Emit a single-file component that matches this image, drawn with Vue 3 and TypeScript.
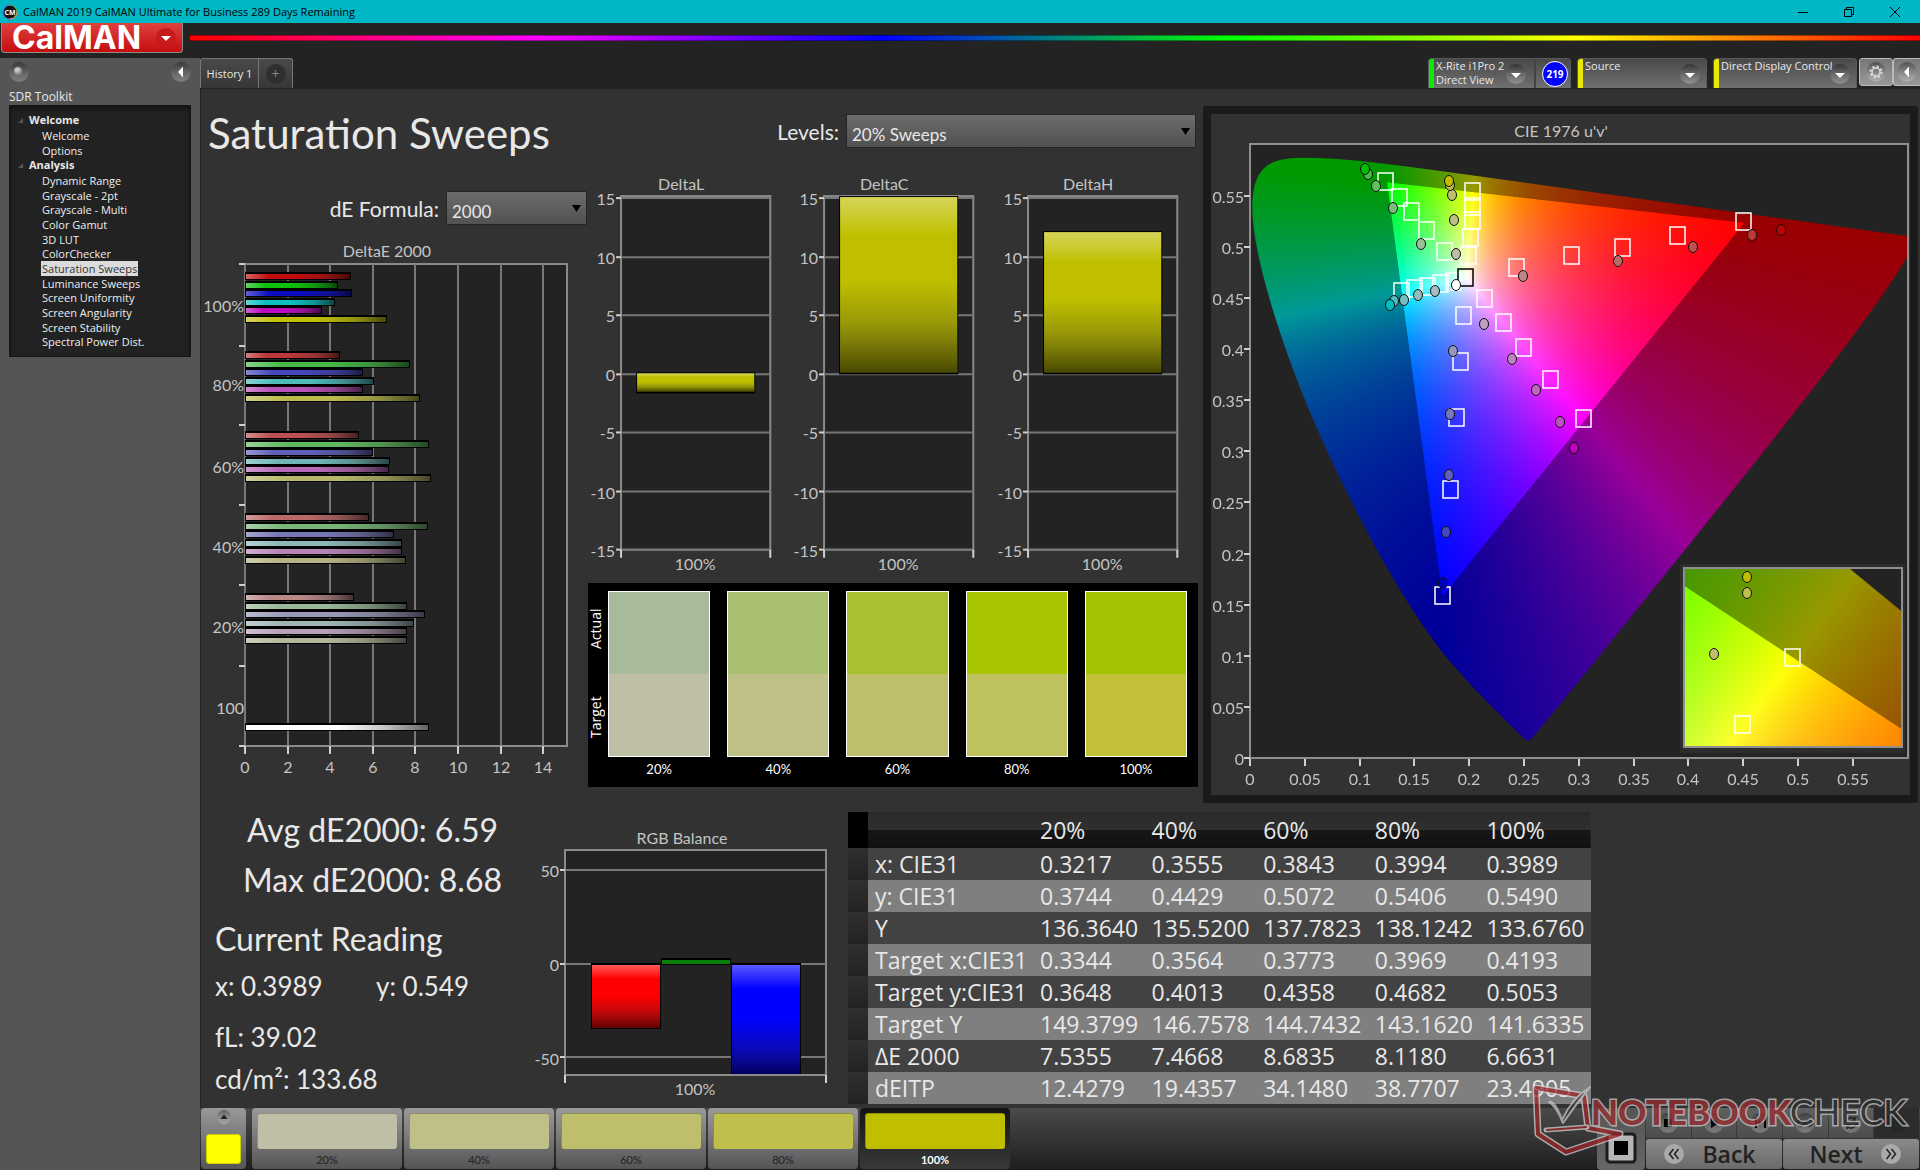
<script setup lang="ts">
import { onMounted, ref } from 'vue'

type Pt = [number, number]
interface Marker { x: number; y: number; fill: string }

/* ---------- navigation ---------- */
const tree = [
  { name: 'Welcome', items: ['Welcome', 'Options'] },
  {
    name: 'Analysis',
    items: [
      'Dynamic Range', 'Grayscale - 2pt', 'Grayscale - Multi', 'Color Gamut', '3D LUT',
      'ColorChecker', 'Saturation Sweeps', 'Luminance Sweeps', 'Screen Uniformity',
      'Screen Angularity', 'Screen Stability', 'Spectral Power Dist.',
    ],
  },
]
const selectedPage = 'Saturation Sweeps'

/* ---------- DeltaE 2000 chart ---------- */
const deGroups = [
  { label: '100%', top: 47, base: 87, colors: ['#c00c0c', '#0cc00c', '#0c0cc0', '#0cc0c0', '#c00cc0', '#c0c00c'], len: [106, 93, 107, 90, 77, 142] },
  { label: '80%', top: 126, base: 166, colors: ['#bb3838', '#46bb46', '#4646bb', '#50bbbb', '#bb50bb', '#bbbb4a'], len: [95, 165, 118, 129, 118, 175] },
  { label: '60%', top: 206, base: 248, colors: ['#bc5151', '#60b860', '#6060b8', '#70b6b6', '#b868b8', '#b8b868'], len: [114, 184, 128, 145, 144, 186] },
  { label: '40%', top: 288, base: 328, colors: ['#bb6868', '#78b678', '#7878b8', '#8cb8b8', '#b884b8', '#b4b484'], len: [124, 183, 149, 157, 157, 161] },
  { label: '20%', top: 368, base: 408, colors: ['#bb8888', '#98b898', '#9898b8', '#a0b4b4', '#b8a0b8', '#b6b69a'], len: [109, 162, 180, 169, 162, 162] },
]
const deBars = deGroups.flatMap((g) =>
  g.len.map((len, i) => ({ key: g.label + i, y: g.top + Math.round(i * 8.5), len, color: g.colors[i] })),
)
deBars.push({ key: 'white', y: 498, len: 184, color: '#ffffff' })
const deTicksY = [39, 121, 200, 280, 360, 441, 521]
const deTicksX = [0, 2, 4, 6, 8, 10, 12, 14].map((v) => ({ v, x: 45 + Math.round(v * 21.3) }))

/* ---------- DeltaL / C / H charts ---------- */
const deltaTicks = [15, 10, 5, 0, -5, -10, -15].map((v) => ({ v, y: 226 - Math.round(v * 11.7) }))
const deltas = [
  { name: 'DeltaL', y: 224, h: 21 },
  { name: 'DeltaC', y: 48, h: 178 },
  { name: 'DeltaH', y: 83, h: 143 },
]

/* ---------- swatches ---------- */
const sweeps = [
  { label: '20%', actual: '#a7bb9c', target: '#bfbfa5' },
  { label: '40%', actual: '#a7bf6e', target: '#bfbf88' },
  { label: '60%', actual: '#a7c133', target: '#bfbf6b' },
  { label: '80%', actual: '#a9c400', target: '#bfc05e' },
  { label: '100%', actual: '#a3c400', target: '#c1c037' },
]
const patches = [
  { label: '20%', color: '#bfbfa5' },
  { label: '40%', color: '#bfbf88' },
  { label: '60%', color: '#bfbf6b' },
  { label: '80%', color: '#bfbf4c' },
  { label: '100%', color: '#bfbf00' },
]

/* ---------- results table ---------- */
const columns = ['20%', '40%', '60%', '80%', '100%']
const rows: [string, string[]][] = [
  ['x: CIE31', ['0.3217', '0.3555', '0.3843', '0.3994', '0.3989']],
  ['y: CIE31', ['0.3744', '0.4429', '0.5072', '0.5406', '0.5490']],
  ['Y', ['136.3640', '135.5200', '137.7823', '138.1242', '133.6760']],
  ['Target x:CIE31', ['0.3344', '0.3564', '0.3773', '0.3969', '0.4193']],
  ['Target y:CIE31', ['0.3648', '0.4013', '0.4358', '0.4682', '0.5053']],
  ['Target Y', ['149.3799', '146.7578', '144.7432', '143.1620', '141.6335']],
  ['ΔE 2000', ['7.5355', '7.4668', '8.6835', '8.1180', '6.6631']],
  ['dEITP', ['12.4279', '19.4357', '34.1480', '38.7707', '23.4905']],
]

/* ---------- chromaticity diagram ---------- */
const PLOT_W = 658
const PLOT_H = 614
const INSET_W = 218
const INSET_H = 179
const uTicks = Array.from({ length: 12 }, (_, i) => ({ label: String(+(i * 0.05).toFixed(2)), x: 39 + Math.round(i * 54.8) }))
const vTicks = Array.from({ length: 12 }, (_, i) => ({ label: String(+(i * 0.05).toFixed(2)), y: 644 - Math.round(i * 51.1) }))

const targets: Pt[] = [
  [135, 37], [149, 53], [161, 67], [176, 86], [194, 107],
  [222, 47], [222, 62], [222, 76], [220, 93], [218, 111],
  [151, 147], [164, 144], [177, 142], [190, 139], [203, 137],
  [266, 123], [321, 111], [372, 103], [427, 91], [493, 77],
  [234, 154], [253, 178], [273, 203], [300, 235], [333, 274],
  [213, 171], [210, 217], [206, 273], [200, 345], [192, 451],
]
const readings: Marker[] = [
  { x: 171, y: 100, fill: '#98bf98' }, { x: 143, y: 64, fill: '#7cbc7c' }, { x: 126, y: 42, fill: '#62bf62' }, { x: 118, y: 30, fill: '#46b946' }, { x: 115, y: 25, fill: '#00bf00' },
  { x: 206, y: 110, fill: '#bfbfa5' }, { x: 204, y: 76, fill: '#bfbf88' }, { x: 202, y: 51, fill: '#bfbf6b' }, { x: 200, y: 41, fill: '#bfbf4c' }, { x: 199, y: 37, fill: '#bfbf00' },
  { x: 185, y: 147, fill: '#a4bfbf' }, { x: 168, y: 151, fill: '#8ebfbf' }, { x: 154, y: 156, fill: '#74bfbf' }, { x: 144, y: 157, fill: '#54bfbf' }, { x: 140, y: 161, fill: '#00bfbf' },
  { x: 273, y: 132, fill: '#bf8888' }, { x: 368, y: 117, fill: '#bf6a6a' }, { x: 443, y: 103, fill: '#bf5050' }, { x: 502, y: 91, fill: '#bf3838' }, { x: 531, y: 86, fill: '#bf0000' },
  { x: 234, y: 180, fill: '#bfa0bf' }, { x: 262, y: 215, fill: '#bf84bf' }, { x: 286, y: 246, fill: '#bf6abf' }, { x: 310, y: 278, fill: '#bf50bf' }, { x: 324, y: 304, fill: '#bf00bf' },
  { x: 203, y: 207, fill: '#9898bf' }, { x: 200, y: 270, fill: '#7878bf' }, { x: 199, y: 331, fill: '#6060bf' }, { x: 196, y: 388, fill: '#4646bf' }, { x: 193, y: 439, fill: '#0000bf' },
  { x: 206, y: 141, fill: '#ffffff' },
]
const insetTargets: Pt[] = [[108, 89], [58, 156]]
const insetReadings: Marker[] = [
  { x: 63, y: 9, fill: '#bfbf00' },
  { x: 63, y: 25, fill: '#bfbf4c' },
  { x: 30, y: 86, fill: '#bfbf6b' },
]

/* CIE 1931 xy of the spectral locus, 380 nm to 700 nm */
const locus: Pt[] = [
  [0.1741, 0.005], [0.1714, 0.0051], [0.1689, 0.0069], [0.1644, 0.0109], [0.1566, 0.0177],
  [0.144, 0.0297], [0.1355, 0.0399], [0.1241, 0.0578], [0.1096, 0.0868], [0.0913, 0.1327],
  [0.0687, 0.2007], [0.0454, 0.295], [0.0235, 0.4127], [0.0082, 0.5384], [0.0039, 0.6548],
  [0.0139, 0.7502], [0.0389, 0.812], [0.0743, 0.8338], [0.1142, 0.8262], [0.1547, 0.8059],
  [0.2296, 0.7543], [0.3016, 0.6923], [0.3731, 0.6245], [0.4441, 0.5547], [0.5125, 0.4866],
  [0.5752, 0.4242], [0.627, 0.3725], [0.6658, 0.334], [0.6915, 0.3083], [0.719, 0.2809], [0.7347, 0.2653],
]

const plotCanvas = ref<HTMLCanvasElement | null>(null)
const insetCanvas = ref<HTMLCanvasElement | null>(null)

/* Fill a canvas with the colour of every chromaticity, dimmed outside the Rec.709 triangle. */
function paint(canvas: HTMLCanvasElement, toXy: (px: number, py: number) => Pt, fromXy: (x: number, y: number) => Pt) {
  const ctx = canvas.getContext('2d')
  if (!ctx) return
  const w = canvas.width
  const h = canvas.height
  const image = ctx.createImageData(w, h)
  for (let j = 0; j < h; j++) {
    for (let i = 0; i < w; i++) {
      const [x, y] = toXy((i + 0.5) / w, (j + 0.5) / h)
      const z = 1 - x - y
      let r = 3.2406 * x - 1.5372 * y - 0.4986 * z
      let g = -0.9689 * x + 1.8758 * y + 0.0415 * z
      let b = 0.0557 * x - 0.204 * y + 1.057 * z
      const level = r < 0 || g < 0 || b < 0 ? 153 : 255
      r = Math.max(r, 0)
      g = Math.max(g, 0)
      b = Math.max(b, 0)
      const k = level / Math.max(r, g, b, 0.0001)
      const o = (j * w + i) * 4
      image.data[o] = r * k
      image.data[o + 1] = g * k
      image.data[o + 2] = b * k
      image.data[o + 3] = 255
    }
  }
  ctx.putImageData(image, 0, 0)
  const p = locus.map(([x, y]) => {
    const [a, b] = fromXy(x, y)
    return [a * w, b * h] as Pt
  })
  const n = p.length
  ctx.globalCompositeOperation = 'destination-in'
  ctx.beginPath()
  ctx.moveTo((p[n - 1][0] + p[0][0]) / 2, (p[n - 1][1] + p[0][1]) / 2)
  for (let i = 0; i < n; i++) {
    const q = p[(i + 1) % n]
    ctx.quadraticCurveTo(p[i][0], p[i][1], (p[i][0] + q[0]) / 2, (p[i][1] + q[1]) / 2)
  }
  ctx.closePath()
  ctx.fill()
}

onMounted(() => {
  if (plotCanvas.value) {
    paint(
      plotCanvas.value,
      (px, py) => {
        const u = px * 0.6
        const v = (1 - py) * 0.6
        const d = 6 * u - 16 * v + 12
        return [(9 * u) / d, (4 * v) / d]
      },
      (x, y) => {
        const d = -2 * x + 12 * y + 3
        return [(4 * x) / d / 0.6, 1 - (9 * y) / d / 0.6]
      },
    )
  }
  if (insetCanvas.value) {
    const cx = 0.4193
    const cy = 0.5053
    const rx = 0.0986
    const ry = 0.0976
    paint(
      insetCanvas.value,
      (px, py) => [cx + (px - 0.5) * rx, cy - (py - 0.5) * ry],
      (x, y) => [(x - cx) / rx + 0.5, 0.5 - (y - cy) / ry],
    )
  }
})
</script>

<template>
  <div class="app">
    <header class="titlebar">
      <svg class="app-icon" viewBox="0 0 16 16" aria-hidden="true">
        <circle cx="8" cy="8" r="7" fill="#111" stroke="#7a4fd0" stroke-width="1" />
        <path d="M8 1a7 7 0 0 1 7 7" fill="none" stroke="#4c4" />
        <path d="M15 8a7 7 0 0 1-7 7" fill="none" stroke="#fa3" />
        <path d="M1 8a7 7 0 0 1 7-7" fill="none" stroke="#38f" />
        <text x="8" y="11" text-anchor="middle" class="icon-text">CM</text>
      </svg>
      <span class="titlebar-text">CalMAN 2019 CalMAN Ultimate for Business 289 Days Remaining</span>
      <div class="window-buttons">
        <button type="button" aria-label="Minimize"><svg viewBox="0 0 10 10"><path d="M0 5.5h10" /></svg></button>
        <button type="button" aria-label="Restore"><svg viewBox="0 0 10 10"><path d="M.5 2.5h7v7h-7zM2.500 2.500v-2h7v7h-2" /></svg></button>
        <button type="button" aria-label="Close"><svg viewBox="0 0 10 10"><path d="M0 0l10 10M10 0L0 10" /></svg></button>
      </div>
    </header>

    <div class="brandbar">
      <button type="button" class="brand">
        <span class="brand-name">CalMAN</span>
        <svg class="brand-arrow" viewBox="0 0 20 20" aria-hidden="true"><circle cx="10" cy="10" r="10" fill="#c8191c" /><path d="M5 8h10l-5 5z" fill="#fff" /></svg>
      </button>
      <div class="rainbow"></div>
    </div>

    <div class="body">
      <aside class="sidebar">
        <div class="sidebar-top">
          <svg class="knob" viewBox="0 0 20 20" aria-hidden="true"><circle cx="10" cy="10" r="10" fill="url(#knob)" /><circle cx="9" cy="9" r="4" fill="url(#ball)" /></svg>
          <button type="button" class="knob" aria-label="Collapse panel">
            <svg viewBox="0 0 20 20"><circle cx="10" cy="10" r="10" fill="url(#knob)" /><path d="M12 4.500v11L7 10z" fill="#fff" /></svg>
          </button>
        </div>
        <h2 class="toolkit">SDR Toolkit</h2>
        <nav class="tree">
          <template v-for="group in tree" :key="group.name">
            <div class="tree-head"><span class="tree-mark"></span>{{ group.name }}</div>
            <ul>
              <li v-for="item in group.items" :key="item">
                <a href="#" :class="{ selected: item === selectedPage }">{{ item }}</a>
              </li>
            </ul>
          </template>
        </nav>
      </aside>

      <main class="workspace">
        <div class="toolbar">
          <div class="tabs">
            <button type="button" class="tab">History 1</button>
            <button type="button" class="tab tab-add" aria-label="Add history"><span>+</span></button>
          </div>
          <div class="devices">
            <div class="device device-meter">
              <span class="strip strip-green"></span>
              <span class="device-name">X-Rite i1Pro 2<br />Direct View</span>
              <button type="button" class="knob" aria-label="Meter menu"><svg viewBox="0 0 20 20"><circle cx="10" cy="10" r="10" fill="url(#knob)" /><path d="M5 9h10l-5 5z" fill="#fff" /></svg></button>
              <span class="device-count"><b>219</b></span>
            </div>
            <div class="device device-source">
              <span class="strip"></span>
              <span class="device-name">Source</span>
              <button type="button" class="knob" aria-label="Source menu"><svg viewBox="0 0 20 20"><circle cx="10" cy="10" r="10" fill="url(#knob)" /><path d="M5 9h10l-5 5z" fill="#fff" /></svg></button>
            </div>
            <div class="device device-display">
              <span class="strip"></span>
              <span class="device-name">Direct Display Control</span>
              <button type="button" class="knob" aria-label="Display menu"><svg viewBox="0 0 20 20"><circle cx="10" cy="10" r="10" fill="url(#knob)" /><path d="M5 9h10l-5 5z" fill="#fff" /></svg></button>
            </div>
            <button type="button" class="tool" aria-label="Settings">
              <svg viewBox="0 0 20 20">
                <circle cx="10" cy="10" r="10" fill="url(#knob)" />
                <circle cx="10" cy="10" r="4" fill="none" stroke="#ddd" stroke-width="1.500" />
                <circle cx="10" cy="10" r="5.500" fill="none" stroke="#ddd" stroke-width="2" stroke-dasharray="2.100 2.220" />
              </svg>
            </button>
            <button type="button" class="tool tool-last" aria-label="Collapse toolbar">
              <svg viewBox="0 0 20 20"><circle cx="10" cy="10" r="10" fill="url(#knob)" /><path d="M12 4.500v11L7 10z" fill="#fff" /></svg>
            </button>
          </div>
        </div>

        <section class="page">
          <div class="upper">
            <div class="col-sweeps">
              <h1>Saturation Sweeps</h1>
              <div class="field field-formula">
                <label for="formula">dE Formula:</label>
                <span class="combo combo-formula"><select id="formula"><option>2000</option></select></span>
              </div>
              <svg class="chart" viewBox="0 0 388 575" role="img" aria-label="DeltaE 2000">
                <defs>
                  <linearGradient id="shadeX" x1="0" x2="1" y1="0" y2="0">
                    <stop offset="0" stop-color="#fff" stop-opacity="0.350" />
                    <stop offset="0.220" stop-color="#fff" stop-opacity="0" />
                    <stop offset="0.500" stop-color="#222" stop-opacity="0" />
                    <stop offset="0.750" stop-color="#222" stop-opacity="0.250" />
                    <stop offset="1" stop-color="#000" stop-opacity="0.620" />
                  </linearGradient>
                  <linearGradient id="shadeY" x1="0" x2="0" y1="0" y2="1">
                    <stop offset="0" stop-color="#fff" stop-opacity="0.350" />
                    <stop offset="0.220" stop-color="#fff" stop-opacity="0" />
                    <stop offset="0.480" stop-color="#222" stop-opacity="0" />
                    <stop offset="0.720" stop-color="#222" stop-opacity="0.250" />
                    <stop offset="1" stop-color="#000" stop-opacity="0.620" />
                  </linearGradient>
                  <linearGradient id="knob" x1="0" x2="0" y1="0" y2="1">
                    <stop offset="0" stop-color="#000" stop-opacity="0.350" />
                    <stop offset="1" stop-color="#fff" stop-opacity="0.250" />
                  </linearGradient>
                  <radialGradient id="ball" cx="0.400" cy="0.350" r="0.700">
                    <stop offset="0" stop-color="#ddd" />
                    <stop offset="1" stop-color="#777" />
                  </radialGradient>
                </defs>
                <text x="187" y="32" text-anchor="middle">DeltaE 2000</text>
                <rect x="45" y="39" width="322" height="482" class="plot" />
                <path v-for="t in deTicksX" :key="'g' + t.v" :d="`M${t.x} 39V521`" class="grid" />
                <path v-for="t in deTicksX" :key="'t' + t.v" :d="`M${t.x} 521v8`" class="tick" />
                <path v-for="y in deTicksY" :key="'y' + y" :d="`M39 ${y}h6`" class="tick" />
                <text v-for="t in deTicksX" :key="'l' + t.v" :x="t.x" y="548" text-anchor="middle">{{ t.v }}</text>
                <text v-for="g in deGroups" :key="g.label" x="44" :y="g.base" text-anchor="end">{{ g.label }}</text>
                <text x="44" y="489" text-anchor="end">100</text>
                <g v-for="b in deBars" :key="b.key">
                  <rect x="45" :y="b.y" :width="b.len" height="8" fill="#000" />
                  <rect x="46" :y="b.y + 2" :width="b.len - 2" height="5" :fill="b.color" />
                  <rect x="46" :y="b.y + 2" :width="b.len - 2" height="5" fill="url(#shadeX)" />
                </g>
              </svg>
            </div>

            <div class="col-deltas">
              <div class="field field-levels">
                <label for="levels">Levels:</label>
                <span class="combo combo-levels"><select id="levels"><option>20% Sweeps</option></select></span>
              </div>
              <div class="delta-row">
                <svg v-for="d in deltas" :key="d.name" class="chart" viewBox="0 0 203 434" role="img" :aria-label="d.name">
                  <text x="93" y="42" text-anchor="middle">{{ d.name }}</text>
                  <rect x="33" y="48" width="149" height="353" class="plot" />
                  <g v-for="t in deltaTicks" :key="t.v">
                    <path :d="`M33 ${t.y}h149`" class="grid" />
                    <path :d="`M28 ${t.y}h5`" class="tick" />
                    <text x="27" :y="t.y + 7" text-anchor="end">{{ t.v }}</text>
                  </g>
                  <path d="M33 401v8M182 401v8" class="tick" />
                  <rect x="48" :y="d.y" width="119" :height="d.h" fill="#000" />
                  <rect x="49" :y="d.y + 1" width="117" :height="d.h - 3" fill="#bfbf00" />
                  <rect x="49" :y="d.y + 1" width="117" :height="d.h - 3" fill="url(#shadeY)" />
                  <text x="107" y="421" text-anchor="middle">100%</text>
                </svg>
              </div>
              <div class="swatches">
                <div class="swatch-axis"><span>Actual</span><span>Target</span></div>
                <div v-for="s in sweeps" :key="s.label" class="swatch">
                  <div class="swatch-box">
                    <div :style="{ background: s.actual }"></div>
                    <div :style="{ background: s.target }"></div>
                  </div>
                  <span>{{ s.label }}</span>
                </div>
              </div>
            </div>

            <div class="cie">
              <svg class="chart" viewBox="0 0 699 681" role="img" aria-label="CIE 1976 u'v'">
                <text x="350" y="23" text-anchor="middle">CIE 1976 u'v'</text>
                <rect x="39" y="30" :width="PLOT_W" :height="PLOT_H" fill="#232323" />
                <foreignObject x="39" y="30" :width="PLOT_W" :height="PLOT_H">
                  <canvas ref="plotCanvas" :width="PLOT_W * 2" :height="PLOT_H * 2"></canvas>
                </foreignObject>
                <rect x="39" y="30" :width="PLOT_W" :height="PLOT_H" class="frame" />
                <g v-for="t in vTicks" :key="'v' + t.label">
                  <path :d="`M33 ${t.y}h6`" class="tick" />
                  <text x="33" :y="t.y + 7" text-anchor="end">{{ t.label }}</text>
                </g>
                <g v-for="t in uTicks" :key="'u' + t.label">
                  <path :d="`M${t.x} 645v7`" class="tick" />
                  <text :x="t.x" y="671" text-anchor="middle">{{ t.label }}</text>
                </g>
                <g transform="translate(39 30)">
                  <rect v-for="(p, i) in targets" :key="i" :x="p[0] - 7" :y="p[1] - 8" width="15" height="17" class="target" />
                  <rect x="208" y="125" width="15" height="17" class="target target-white" />
                  <ellipse v-for="(m, i) in readings" :key="'r' + i" :cx="m.x" :cy="m.y" rx="4.500" ry="5.500" :fill="m.fill" class="reading" />
                </g>
                <rect x="469" y="450" width="225" height="189" fill="#2d2d2d" />
                <g transform="translate(473 454)">
                  <rect width="218" height="179" fill="#232323" />
                  <foreignObject :width="INSET_W" :height="INSET_H">
                    <canvas ref="insetCanvas" :width="INSET_W * 2" :height="INSET_H * 2"></canvas>
                  </foreignObject>
                  <rect width="218" height="179" class="frame" />
                  <rect v-for="(p, i) in insetTargets" :key="i" :x="p[0] - 7" :y="p[1] - 8" width="15" height="17" class="target" />
                  <ellipse v-for="(m, i) in insetReadings" :key="'r' + i" :cx="m.x" :cy="m.y" rx="4.500" ry="5.500" :fill="m.fill" class="reading" />
                </g>
              </svg>
            </div>
          </div>

          <div class="lower">
            <div class="stats">
              <p class="big">Avg dE2000: 6.59</p>
              <p class="big">Max dE2000: 8.68</p>
              <h3>Current Reading</h3>
              <div class="xy"><span>x: 0.3989</span><span>y: 0.549</span></div>
              <p class="value">fL: 39.02</p>
              <p class="value value-last">cd/m²: 133.68</p>
            </div>

            <svg class="chart" viewBox="0 0 310 305" role="img" aria-label="RGB Balance">
              <text x="152" y="41" text-anchor="middle">RGB Balance</text>
              <rect x="35" y="47" width="261" height="225" class="plot" />
              <path d="M35 67h261M35 161h261M35 254h261" class="grid" />
              <path d="M30 67h5M30 161h5M30 254h5M35 272v8M296 272v8" class="tick" />
              <text x="29" y="74" text-anchor="end">50</text>
              <text x="29" y="168" text-anchor="end">0</text>
              <text x="29" y="262" text-anchor="end">-50</text>
              <text x="165" y="292" text-anchor="middle">100%</text>
              <rect x="61" y="160" width="70" height="66" fill="#000" />
              <rect x="62" y="162" width="68" height="63" fill="#f00" />
              <rect x="62" y="162" width="68" height="63" fill="url(#shadeY)" />
              <rect x="131" y="155" width="70" height="7" fill="#000" />
              <rect x="132" y="157" width="68" height="4" fill="#0a800a" />
              <rect x="201" y="160" width="70" height="111" fill="#000" />
              <rect x="202" y="162" width="68" height="109" fill="#00f" />
              <rect x="202" y="162" width="68" height="109" fill="url(#shadeY)" />
            </svg>

            <table class="results">
              <thead>
                <tr>
                  <td class="handle"></td>
                  <td class="name"></td>
                  <th v-for="c in columns" :key="c" scope="col">{{ c }}</th>
                </tr>
              </thead>
              <tbody>
                <tr v-for="r in rows" :key="r[0]">
                  <td class="handle"></td>
                  <th scope="row" class="name">{{ r[0] }}</th>
                  <td v-for="(v, i) in r[1]" :key="i">{{ v }}</td>
                </tr>
              </tbody>
            </table>
          </div>
        </section>

        <footer class="patchbar">
          <button type="button" class="current" aria-label="Current patch">
            <svg viewBox="0 0 16 16" aria-hidden="true"><circle cx="8" cy="8" r="7" fill="url(#knob)" /><path d="M4.500 10h7L8 5.500z" fill="#222" /></svg>
            <span class="current-color"></span>
          </button>
          <div class="patches">
            <button v-for="(p, i) in patches" :key="p.label" type="button" class="patch" :class="{ active: i === 4 }">
              <span class="patch-color" :style="{ background: p.color }"></span>
              <span>{{ p.label }}</span>
            </button>
          </div>
          <div class="transport">
            <button type="button" class="stop" aria-label="Stop">
              <svg viewBox="0 0 32 32"><rect x="2" y="2" width="28" height="28" rx="3" fill="#b5b5b5" stroke="#1c1c1c" stroke-width="3" /><rect x="9" y="9" width="14" height="14" fill="#000" /></svg>
            </button>
            <div class="controls">
              <div class="control-row">
                <button type="button" aria-label="Read once"><svg viewBox="0 0 20 20"><circle cx="10" cy="10" r="10" fill="url(#knob)" /><path d="M6 6h8v8H6z" /></svg></button>
                <button type="button" aria-label="Play"><svg viewBox="0 0 20 20"><circle cx="10" cy="10" r="10" fill="url(#knob)" /><path d="M7 5l8 5-8 5z" /></svg></button>
                <button type="button" aria-label="Step"><svg viewBox="0 0 20 20"><circle cx="10" cy="10" r="10" fill="url(#knob)" /><path d="M5 5h2v10H5zM8 7l5 3-5 3zM14 5h2v10h-2z" /></svg></button>
                <button type="button" aria-label="Loop"><svg viewBox="0 0 20 20"><circle cx="10" cy="10" r="10" fill="url(#knob)" /><path d="M10 10c-4-5-7-2-7 0s3 5 7 0 7-2 7 0-3 5-7 0z" fill="none" stroke="#222" stroke-width="2" /></svg></button>
                <button type="button" aria-label="Refresh"><svg viewBox="0 0 20 20"><circle cx="10" cy="10" r="10" fill="url(#knob)" /><path d="M5 10a5 5 0 0 1 9-3M15 10a5 5 0 0 1-9 3M14 4v4h-4M6 16v-4h4" fill="none" stroke="#222" stroke-width="1.500" /></svg></button>
                <button type="button" class="dim" aria-label="More"><svg viewBox="0 0 20 20"><circle cx="10" cy="10" r="9" fill="#262626" /></svg></button>
              </div>
              <div class="step-row">
                <button type="button"><svg viewBox="0 0 20 20" aria-hidden="true"><circle cx="10" cy="10" r="10" fill="#aaa" /><path d="M9.500 5l-4 5 4 5M14.500 5l-4 5 4 5" fill="none" stroke="#222" stroke-width="1.500" /></svg>Back</button>
                <button type="button">Next<svg viewBox="0 0 20 20" aria-hidden="true"><circle cx="10" cy="10" r="10" fill="#aaa" /><path d="M5.500 5l4 5-4 5M10.500 5l4 5-4 5" fill="none" stroke="#222" stroke-width="1.500" /></svg></button>
              </div>
            </div>
          </div>
        </footer>
      </main>
    </div>

    <svg class="watermark" viewBox="0 0 380 74" role="img" aria-label="Notebookcheck">
      <g stroke-linejoin="round" stroke-linecap="round">
        <path d="M6 4L54 12L58 44L90 50L36 68L8 50Z" fill="none" stroke="#d0d0d0" stroke-width="7" />
        <path d="M6 4L54 12L58 44L90 50L36 68L8 50Z" fill="none" stroke="#9c2529" stroke-width="4" />
        <path d="M16 46L57 43" stroke="#d0d0d0" stroke-width="5" />
        <path d="M17 46L56 43" stroke="#9c2529" stroke-width="2" />
        <path d="M19 18q6-2 13 18Q42 14 60 3Q46 20 33 39Q26 22 19 18z" fill="#333" stroke="#c4c4c4" stroke-width="2" />
      </g>
      <text x="61" y="41" class="wm-a">NOTEBOOK</text>
      <text x="260" y="41" class="wm-b">CHECK</text>
    </svg>
  </div>
</template>

<style>
body {
  margin: 0;
  background: #232323;
}
</style>

<style scoped>
.app {
  --display: Lato, "Open Sans", sans-serif;
  --ui: "Open Sans", "Noto Sans", sans-serif;
  position: relative;
  display: flex;
  flex-direction: column;
  min-height: 100vh;
  background: #232323;
  color: #e8e8e8;
  font-family: var(--ui);
  font-size: 12px;
}
.app *, .app *::before, .app *::after { box-sizing: border-box; }
button { margin: 0; padding: 0; border: 0; background: none; color: inherit; font: inherit; }
h1, h2, h3, p, ul { margin: 0; padding: 0; font-weight: 400; }

/* title bar */
.titlebar {
  display: flex;
  align-items: center;
  height: 23px;
  padding-left: 2px;
  background: #00b7c6;
  color: #000;
}
.app-icon { width: 16px; height: 16px; margin-right: 5px; }
.icon-text { fill: #fff; font: 700 7px "Open Sans", sans-serif; }
.titlebar-text { flex: 1; font-size: 11px; line-height: 23px; }
.window-buttons { display: flex; margin-right: 2px; }
.window-buttons button { display: flex; justify-content: center; align-items: center; width: 46px; height: 20px; }
.window-buttons svg { width: 10px; height: 10px; fill: none; stroke: #000; overflow: visible; }

/* brand */
.brandbar { display: flex; align-items: flex-start; height: 35px; padding-left: 1px; }
.brand {
  display: flex;
  align-items: center;
  justify-content: space-between;
  width: 182px;
  height: 30px;
  padding: 0 6px 0 10px;
  border: solid #8d8d8d;
  border-width: 0 1px 1px;
  border-radius: 0 0 4px 4px;
  background: linear-gradient(#e04040, #c50d0d);
  color: #fff;
  font: 700 32px/24px Inter, "Open Sans", sans-serif;
}
.brand-arrow { width: 20px; height: 20px; }
.rainbow {
  flex: 1;
  height: 6px;
  margin: 12px 0 0 7px;
  border: solid rgba(0, 0, 0, 0.4);
  border-width: 1px 0;
  background: linear-gradient(90deg, #f00, #f0f, #00f, #0f0, #ff0, #f00) border-box;
}

/* sidebar */
.body { display: flex; flex: 1; }
.sidebar { width: 200px; padding: 4px 9px; background: #555; }
.sidebar-top { display: flex; justify-content: space-between; height: 20px; }
.knob { display: block; width: 20px; height: 20px; }
.knob svg { display: block; width: 20px; height: 20px; }
.toolkit { margin-top: 6px; font-size: 12px; line-height: 17px; }
.tree {
  padding: 6px 0 7px 19px;
  border: 1px solid #161616;
  background: #222;
  box-shadow: inset 0 3px 5px #141414;
  font-size: 11px;
  line-height: 15px;
}
.tree-head { position: relative; font-weight: 700; }
.tree-mark {
  position: absolute;
  left: -11px;
  top: 6px;
  width: 5px;
  height: 5px;
  background: #555;
  clip-path: polygon(100% 0, 100% 100%, 0 100%);
}
.tree ul { list-style: none; padding: 1px 0 0 12px; }
.tree li { height: 15px; }
.tree li:nth-child(3n + 2) { height: 14px; }
.tree a { padding: 0 1px; color: #eee; text-decoration: none; white-space: nowrap; }
.tree a.selected { display: inline-block; background: #dcdcdc; color: #333; }

/* toolbar */
.workspace { display: flex; flex: 1; flex-direction: column; min-width: 0; }
.toolbar { display: flex; justify-content: space-between; height: 30px; }
.tabs { display: flex; }
.tab {
  width: 59px;
  border: solid #777;
  border-width: 1px 1px 0;
  border-radius: 3px 0 0 0;
  background: linear-gradient(#4a4a4a, #363636);
  font-size: 11px;
  white-space: nowrap;
}
.tab-add { width: 34px; border-left: 0; border-radius: 0 3px 0 0; }
.tab-add span { display: inline-block; width: 20px; border-radius: 50%; background: #2e2e2e; color: #888; font-size: 14px; line-height: 20px; }
.devices { display: flex; }
.device {
  display: flex;
  align-items: center;
  height: 30px;
  margin-right: 6px;
  border: 1px solid #5a5a5a;
  border-bottom: 0;
  border-radius: 4px 4px 0 0;
  background: linear-gradient(#494949, #707070);
}
.device-meter { width: 143px; }
.device-source { width: 130px; }
.device-display { width: 144px; margin-right: 2px; }
.device-source .knob, .device-display .knob { margin-right: 6px; }
.strip { flex: none; align-self: stretch; width: 5px; border-radius: 3px 0 0 0; background: #e8e800; }
.strip-green { background: #0bea0b; }
.device-name { flex: 1; min-width: 0; align-self: flex-start; padding-left: 2px; font-size: 11px; line-height: 14px; white-space: nowrap; }
.device .knob { flex: none; }
.device-count {
  display: flex;
  justify-content: center;
  align-items: center;
  width: 36px;
  height: 29px;
  margin-left: 8px;
  padding-left: 4px;
  border-left: 2px solid #444;
}
.device-count b { flex: none; width: 26px; border: 1px solid #fff; border-radius: 50%; background: #00f; color: #fff; font-size: 10px; line-height: 24px; text-align: center; }
.tool {
  display: flex;
  justify-content: center;
  align-items: center;
  width: 34px;
  height: 28px;
  border: 1px solid #bbb;
  border-radius: 3px;
  background: linear-gradient(#777, #999);
}
.tool svg { width: 20px; height: 20px; }
.tool-last { width: 27px; border-right: 0; border-radius: 3px 0 0 3px; }

/* page */
.page { flex: 1; padding-right: 2px; background: #323232; box-shadow: inset 1px 1px #232323; }
.upper { display: grid; grid-template-columns: minmax(0, 388fr) minmax(0, 610fr) minmax(0, 720fr); }
.chart { display: block; width: 100%; height: auto; font-family: var(--display); font-size: 16px; }
.chart text { fill: #c4c4c4; }
.plot { fill: #232323; stroke: #8a8a8a; stroke-width: 2; }
.frame { fill: none; stroke: #8f8f8f; stroke-width: 2; }
.grid { fill: none; stroke: #777; stroke-width: 2; }
.tick { fill: none; stroke: #d0d0d0; stroke-width: 2; }
.target { fill: none; stroke: #fff; stroke-width: 1.500; }
.target-white { stroke: #000; }
.reading { stroke: #111; stroke-width: 1; }
.chart canvas { display: block; width: 100%; height: 100%; }

h1 { height: 103px; padding: 15px 0 0 8px; font-family: var(--display); font-size: 42px; line-height: 60px; white-space: nowrap; }
.field { display: flex; justify-content: flex-end; align-items: center; gap: 7px; height: 34px; font-family: var(--display); font-size: 21px; white-space: nowrap; }
.field-formula { padding-right: 1px; }
.field-levels { margin-top: 26px; padding-right: 2px; }
.combo { position: relative; display: block; height: 34px; }
.combo-formula { width: 141px; }
.combo-levels { width: 350px; }
.combo::after {
  content: "";
  position: absolute;
  right: 6px;
  top: 14px;
  width: 9px;
  height: 7px;
  background: #000;
  clip-path: polygon(0 0, 100% 0, 50% 100%);
}
.combo select {
  appearance: none;
  width: 100%;
  height: 34px;
  padding: 6px 6px 0 5px;
  border: 1px solid #252525;
  border-radius: 0;
  background: linear-gradient(#6c6c6c, #515151);
  color: #e8e8e8;
  font-family: var(--display);
  font-size: 17px;
}
.delta-row { display: grid; grid-template-columns: repeat(3, minmax(0, 1fr)); }

.swatches { display: flex; gap: 17px; padding: 8px 11px 6px 0; background: #000; color: #fff; }
.swatch-axis { display: flex; flex-direction: column; width: 20px; height: 176px; margin: -6px -17px 0 0; }
.swatch-axis span { flex: 1; padding-left: 5px; writing-mode: vertical-rl; transform: rotate(180deg); font-size: 14px; font-weight: 500; line-height: 15px; text-align: center; }
.swatch { flex: 1; font-family: var(--display); font-size: 13px; line-height: 24px; text-align: center; }
.swatch-box { height: 166px; border: 1px solid #fff; }
.swatch-box div { height: 82px; }

.cie { margin: 18px 0 0 5px; border: 8px solid #1a1a1a; border-radius: 3px; }

.lower {
  display: grid;
  grid-template-columns: minmax(0, 330fr) minmax(0, 310fr) minmax(0, 751fr) minmax(0, 327fr);
  align-items: start;
}
.stats { padding: 2px 0 0 15px; font-family: var(--display); white-space: nowrap; }
.stats p, .stats h3 { line-height: 50px; }
.big { font-size: 32px; text-align: center; }
.stats h3 { margin-top: 9px; font-size: 32px; }
.xy { display: grid; grid-template-columns: 161px 1fr; font-size: 26px; line-height: 44px; }
.stats .value { margin-top: 7px; font-size: 26px; line-height: 44px; }
.stats .value-last { margin-top: -2px; }

.results { width: calc(100% - 8px); margin: 9px 0 0 8px; border-collapse: collapse; table-layout: fixed; font-size: 23px; }
.results th, .results td { height: 32px; padding: 0 0 0 7px; font-weight: 400; line-height: 30px; text-align: left; white-space: nowrap; }
.results thead tr { background: linear-gradient(#2a2a2a, #303030 50%, #171717 50%, #101010); }
.results thead td, .results thead th { height: 36px; }
.results .handle { width: 20px; padding: 0; background: linear-gradient(#303030, #222); }
.results thead .handle { background: #000; }
.results .name { width: 165px; }
.results tbody tr { background: #424242; }
.results tbody tr:nth-child(even) { background: #7f7f7f; }

/* patch bar */
.patchbar { display: flex; height: 62px; padding: 0 1px; background: linear-gradient(#4a4a4a, #1e1e1e); }
.current { display: flex; flex-direction: column; align-items: center; gap: 9px; width: 45px; height: 61px; border-radius: 4px; background: linear-gradient(#999, #555); }
.current svg { width: 16px; height: 16px; margin-top: 1px; }
.current-color { width: 35px; height: 30px; border: 1px solid #cc0; border-radius: 3px; background: #ff0; }
.patches { display: flex; gap: 2px; margin-left: 6px; }
.patch { width: 150px; height: 61px; padding: 5px; border-radius: 4px; background: linear-gradient(#9a9a9a, #555); color: #222; font: 11px/15px var(--display); }
.patch span { display: block; }
.patch-color { height: 36px; margin-bottom: 3px; border: solid rgba(0, 0, 0, 0.25); border-width: 1px 0 0 1px; border-radius: 3px; }
.patch.active { background: linear-gradient(#141414, #383838); color: #fff; font-weight: 700; }
.transport { display: flex; gap: 1px; width: 322px; margin-left: auto; }
.stop { display: flex; justify-content: center; align-items: flex-end; width: 48px; padding-bottom: 6px; border-radius: 4px; background: linear-gradient(#555, #666); }
.stop svg { width: 32px; height: 32px; }
.controls { flex: 1; display: flex; flex-direction: column; gap: 1px; }
.control-row, .step-row { display: flex; gap: 1px; height: 30px; }
.control-row button { display: flex; flex: 1; justify-content: center; align-items: center; background: linear-gradient(#606060, #4c4c4c); }
.control-row svg { width: 20px; height: 20px; }
.control-row .dim { background: #2c2c2c; }
.step-row button { display: flex; flex: 1; justify-content: center; align-items: center; gap: 18px; padding-right: 8px; border-radius: 3px; background: linear-gradient(#8a8a8a, #6a6a6a); color: #222; font-size: 23px; font-weight: 600; }
.step-row button:last-child { padding: 0 0 0 8px; }
.step-row svg { width: 20px; height: 20px; }

.watermark { position: absolute; right: 10px; bottom: 12px; width: 380px; height: 74px; opacity: 0.75; overflow: visible; pointer-events: none; }
.watermark text { font-family: Lato, sans-serif; font-size: 35px; paint-order: stroke; stroke: #c8c8c8; stroke-width: 3; }
.wm-a { fill: #9c2d30; font-weight: 900; }
.wm-b { fill: #2c2c2c; font-weight: 400; }
</style>
